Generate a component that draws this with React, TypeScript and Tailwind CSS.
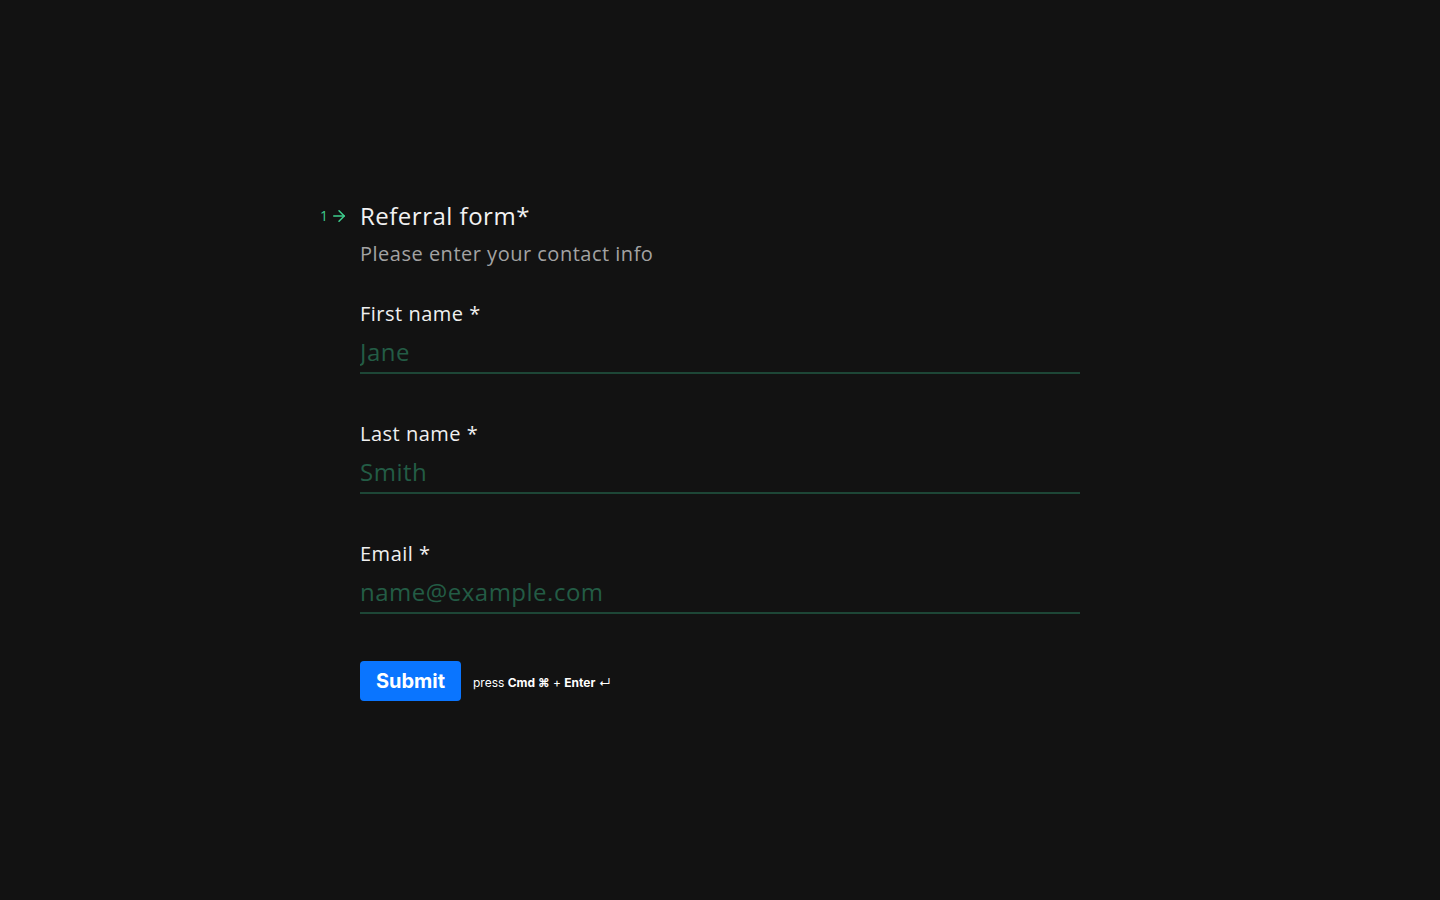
import { ArrowRight } from 'lucide-react'

const fields = [
  { label: 'First name', placeholder: 'Jane', type: 'text' },
  { label: 'Last name', placeholder: 'Smith', type: 'text' },
  { label: 'Email', placeholder: 'name@example.com', type: 'email' },
]

const App = () => {
  return (
    <div
      className="min-h-screen bg-[#121212] flex justify-center tracking-[0.5px]"
      style={{ fontFamily: '"Open Sans", sans-serif' }}
    >
      <div className="w-[720px] pt-[200px]">
        <div className="relative">
          <div className="absolute -left-[40px] top-0 h-8 flex items-center gap-px text-[#3ecf8e]">
            <span className="text-sm">1</span>
            <ArrowRight size={18} strokeWidth={2} />
          </div>
          <h1 className="text-2xl leading-8 text-[#f2f2f2]">Referral form*</h1>
          <p className="mt-2 text-xl leading-7 text-[#a3a3a3]">
            Please enter your contact info
          </p>
        </div>

        <div className="mt-8">
          {fields.map((f, i) => (
            <div key={f.label} className={i > 0 ? 'mt-[46px]' : ''}>
              <label className="block text-xl leading-7 text-[#f0f0f0]">
                {f.label} *
              </label>
              <input
                type={f.type}
                placeholder={f.placeholder}
                className="mt-0.5 block w-full h-11 bg-transparent border-b-2 border-[#1d4636] text-2xl tracking-[0.5px] text-[#3ecf8e] placeholder:text-[#235c45] outline-none"
              />
            </div>
          ))}
        </div>

        <div className="mt-[47px] flex items-center gap-3 tracking-normal">
          <button
            className="h-10 w-[101px] rounded bg-[#0a75ff] text-white text-xl font-bold"
            style={{ fontFamily: 'Inter, sans-serif' }}
          >
            Submit
          </button>
          <span
            className="pt-1 text-xs text-white"
            style={{ fontFamily: 'Inter, sans-serif' }}
          >
            press <b>Cmd ⌘</b> + <b>Enter</b> ↵
          </span>
        </div>
      </div>
    </div>
  )
}

export default App
